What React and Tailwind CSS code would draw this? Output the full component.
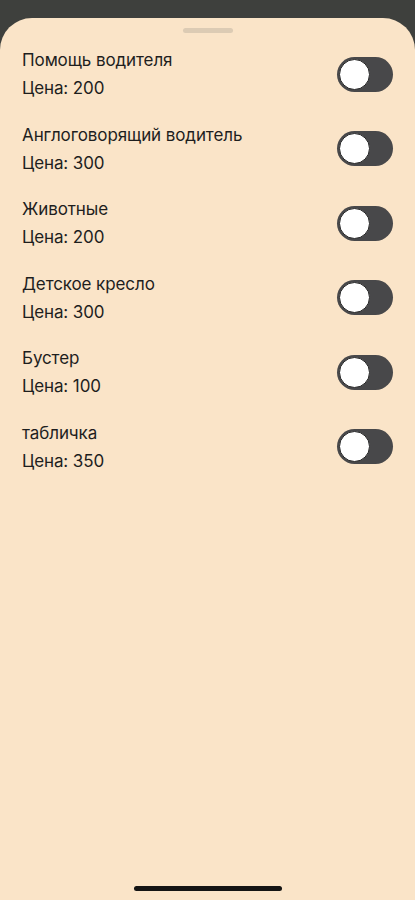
import React from "react";

const items = [
  { title: "Помощь водителя", price: 200 },
  { title: "Англоговорящий водитель", price: 300 },
  { title: "Животные", price: 200 },
  { title: "Детское кресло", price: 300 },
  { title: "Бустер", price: 100 },
  { title: "табличка", price: 350 },
];

function Toggle() {
  return (
    <div className="w-[56px] h-[35px] rounded-full bg-[#48484a] p-[2px] flex items-center">
      <div className="w-[31px] h-[31px] rounded-full bg-white border border-[#2a2a2a]" />
    </div>
  );
}

export default function App() {
  return (
    <div
      className="w-[415px] h-[900px] bg-[#3e403d] flex flex-col overflow-hidden"
      style={{ fontFamily: "Inter, 'Noto Sans', sans-serif" }}
    >
      <div className="mt-[18px] flex-1 bg-[#fae4c8] rounded-t-[32px] flex flex-col relative">
        <div className="flex justify-center pt-[10px]">
          <div className="w-[50px] h-[5px] rounded-full bg-[#dccbb4]" />
        </div>
        <div className="flex flex-col gap-[18.5px] px-[22px] pt-[13px]">
          {items.map((it) => (
            <div key={it.title} className="flex items-center justify-between">
              <div className="flex flex-col text-[17px] leading-[28px] text-[#1e1e1e] tracking-[-0.1px]">
                <span>{it.title}</span>
                <span>Цена: {it.price}</span>
              </div>
              <Toggle />
            </div>
          ))}
        </div>
        <div className="mt-auto flex justify-center pb-[9px]">
          <div className="w-[148px] h-[5px] rounded-full bg-[#141414]" />
        </div>
      </div>
    </div>
  );
}
